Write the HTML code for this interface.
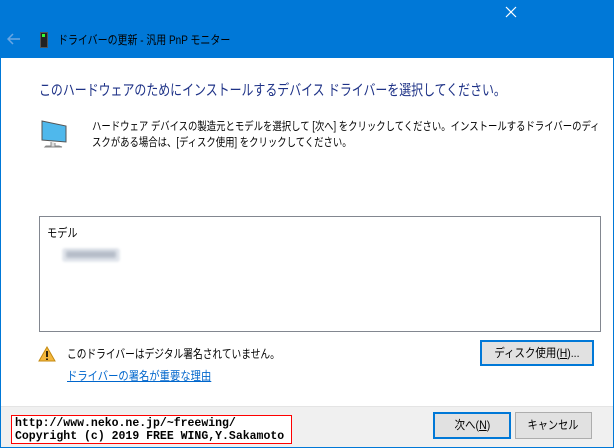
<!DOCTYPE html>
<html><head><meta charset="utf-8"><style>
*{margin:0;padding:0;box-sizing:border-box}
body{width:614px;height:448px;overflow:hidden;font-family:"Liberation Sans","Noto Sans CJK JP",sans-serif;font-size:12px;color:#000;background:#fff;position:relative}
.title{position:absolute;left:0;top:0;width:614px;height:58px;background:#0078d7}
.frame{position:absolute;left:0;top:58px;width:614px;height:390px;border:1px solid #0078d7;border-top:none}
.abs{position:absolute;white-space:nowrap;transform-origin:left top}
.btn{position:absolute;background:#e1e1e1;border:1px solid #adadad;text-align:center;line-height:24px;font-size:12px;overflow:hidden}
.btn.def{border:2px solid #0078d7;line-height:22px}
.s{display:inline-block;transform-origin:center;}
</style></head><body>
<div class="title"></div>
<svg class="abs" style="left:505px;top:6px" width="12" height="12"><path d="M1 1L11 11M11 1L1 11" stroke="#fff" stroke-width="1.2"/></svg>
<svg class="abs" style="left:7px;top:33px" width="14" height="12"><path d="M13 6H2M6 1L1 6L6 11" stroke="#6aa7e3" stroke-width="1.5" fill="none"/></svg>
<svg class="abs" style="left:40px;top:32px" width="8" height="16"><rect x="0.5" y="0.5" width="7" height="15" fill="#222" stroke="#555"/><rect x="2" y="2" width="3" height="3" fill="#3f3"/></svg>
<div class="abs" style="left:58px;top:31px;font-size:12px;color:#000;transform:scaleX(0.83)">ドライバーの更新 - 汎用 PnP モニター</div>
<div class="frame"></div>
<div class="abs" style="left:39px;top:79px;font-size:15px;color:#1e3287;transform:scaleX(0.795)">このハードウェアのためにインストールするデバイス ドライバーを選択してください。</div>
<svg class="abs" style="left:40px;top:119px" width="30" height="30"><path d="M2 2L26 7V23L2 21Z" fill="#4fb8ec" stroke="#555" stroke-width="1"/><path d="M11 23V27H6L5 28H22L19 27H15V24" fill="#ddd" stroke="#888"/></svg>
<div class="abs" style="left:92px;top:119px;font-size:11.5px;line-height:16px;transform:scaleX(0.815)">ハードウェア デバイスの製造元とモデルを選択して [次へ] をクリックしてください。インストールするドライバーのディ<br>スクがある場合は、[ディスク使用] をクリックしてください。</div>
<div class="abs" style="left:39px;top:216px;width:562px;height:116px;border:1px solid #828790;background:#fff"></div>
<div class="abs" style="left:47px;top:224px;font-size:12px;transform:scaleX(0.85)">モデル</div>
<div class="abs" style="left:62px;top:248px;width:58px;height:14px;background:#e4e8ee;border-radius:3px;filter:blur(1px)"></div>
<div class="abs" style="left:66px;top:251px;width:50px;height:7px;background:#b5bcc8;filter:blur(1.5px)"></div>
<svg class="abs" style="left:38px;top:346px" width="18" height="16"><path d="M9 1L17 15H1Z" fill="#f4b73d" stroke="#c48a10"/><path d="M9 5V11M9 12.5V14" stroke="#000" stroke-width="1.6"/></svg>
<div class="abs" style="left:67px;top:345px;font-size:12px;transform:scaleX(0.81)">このドライバーはデジタル署名されていません。</div>
<div class="abs" style="left:67px;top:367px;font-size:12px;color:#0066cc;text-decoration:underline;transform:scaleX(0.86)">ドライバーの署名が重要な理由</div>
<div class="btn def" style="left:480px;top:340px;width:114px;height:26px"><span class="s" style="transform:scaleX(0.87)">ディスク使用(<u>H</u>)...</span></div>
<div class="abs" style="left:1px;top:406px;width:612px;height:41px;background:#f0f0f0;border-top:1px solid #e4e4e4"></div>
<div class="abs" style="left:11px;top:415px;width:281px;height:29px;border:1px solid #f00;background:#fff;font-family:'Liberation Mono',monospace;font-size:11.5px;font-weight:bold;line-height:13px;padding:1px 0 0 3px">http://www.neko.ne.jp/~freewing/<br>Copyright (c) 2019 FREE WING,Y.Sakamoto</div>
<div class="btn def" style="left:433px;top:412px;width:78px;height:27px"><span class="s" style="transform:scaleX(0.88)">次へ(<u>N</u>)</span></div>
<div class="btn" style="left:515px;top:412px;width:77px;height:27px"><span class="s" style="transform:scaleX(0.85)">キャンセル</span></div>
</body></html>
